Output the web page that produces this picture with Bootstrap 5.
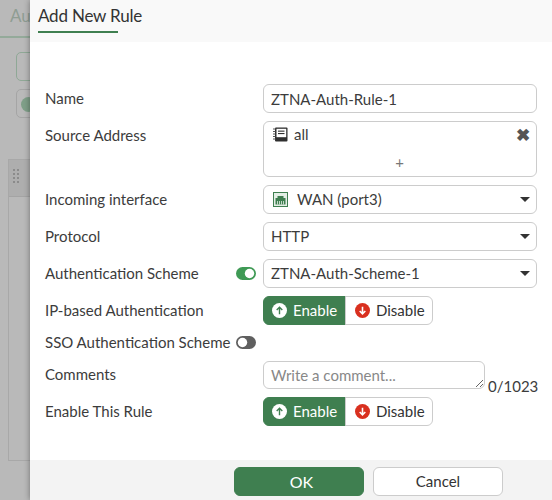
<!DOCTYPE html>
<html lang="en">
<head>
    <meta charset="UTF-8">
    <meta name="viewport" content="width=device-width, initial-scale=1.0">
    <title>Add New Rule</title>
    <link rel="stylesheet" href="https://cdn.jsdelivr.net/npm/bootstrap@5.3.0/dist/css/bootstrap.min.css">
    <style>
        html, body {
            height: 500px;
            overflow: hidden;
        }
        body {
            font-family: Lato, "Liberation Sans", sans-serif;
            font-size: 15px;
            color: #3c3c3c;
            background: #b9b9b9;
        }
        .back-pane {
            width: 30px;
            height: 500px;
            overflow: hidden;
            flex: none;
        }
        .back-title {
            height: 38px;
            padding: 3px 0 0 10px;
            font-size: 17px;
            white-space: nowrap;
            color: #8f9d93;
            border-bottom: 2px solid #94aa9a;
        }
        .back-btn {
            width: 40px;
            height: 29px;
            margin: 0 0 8px 16px;
            border: 1px solid #a5a5a5;
            border-radius: 5px;
        }
        .back-btn.first {
            margin-top: 14px;
            border-color: #8fa896;
        }
        .back-dot {
            width: 15px;
            height: 15px;
            margin: 7px 0 0 4px;
            border-radius: 50%;
            background: #7f9f88;
        }
        .back-table {
            width: 60px;
            height: 302px;
            margin: 41px 0 0 8px;
            border: 1px solid #a8a8a8;
        }
        .back-head {
            height: 37px;
            padding: 9px 0 0 4px;
            background: #aeaeae;
            border-bottom: 1px solid #a4a4a4;
        }
        .grip {
            display: block;
        }
        .rule-modal {
            flex: 1;
            height: 500px;
            background: #fff;
            box-shadow: 0 0 6px rgba(0, 0, 0, 0.4);
        }
        .rule-head {
            height: 42px;
            padding: 3px 0 0 8px;
            background: #f9f9f9;
        }
        .rule-tab {
            width: 80px;
            height: 30px;
            font-size: 17px;
            line-height: 25px;
            white-space: nowrap;
            color: #333;
            letter-spacing: -0.2px;
            border-bottom: 2px solid #3f7f50;
        }
        .rule-body {
            height: 418px;
            padding: 42px 15px 0;
        }
        .rule-row {
            margin-bottom: 8px;
        }
        .rule-label {
            width: 218px;
            flex: none;
            padding-right: 7px;
            line-height: 29px;
            white-space: nowrap;
        }
        .rule-label.tight {
            line-height: 27px;
        }
        .rule-label.snug {
            line-height: 28px;
        }
        .sso-row {
            margin-bottom: 10px;
        }
        .sso-row .rule-label {
            height: 18px;
            line-height: 18px;
        }
        .rule-field {
            width: 274px;
            height: 29px;
            padding: 0 7px;
            font-size: 15px;
            line-height: 27px;
            color: #3c3c3c;
            border: 1px solid #ccc;
            border-radius: 6px;
            box-shadow: none;
        }
        .addr-field {
            height: 56px;
            padding: 0 6px 0 9px;
        }
        .addr-item {
            height: 25px;
        }
        .addr-icon {
            margin-right: 6px;
        }
        .addr-plus {
            margin-top: 5px;
            padding-right: 4px;
            line-height: 20px;
            color: #777;
        }
        .addr-x {
            font-size: 17px;
            font-weight: 700;
            color: #555;
            line-height: 1;
        }
        .wan-icon {
            margin: 0 9px 0 2px;
        }
        .caret-down {
            width: 0;
            height: 0;
            margin-right: -1px;
            border-left: 5px solid transparent;
            border-right: 5px solid transparent;
            border-top: 5px solid #333;
        }
        .rule-row .form-check-input {
            width: 20px;
            height: 13px;
            margin: 0;
            border: 0;
            float: none;
            background-color: #5f5f5f;
            background-image: url("data:image/svg+xml,%3csvg xmlns='http://www.w3.org/2000/svg' viewBox='-4 -4 8 8'%3e%3ccircle r='2.9' fill='%23fff'/%3e%3c/svg%3e");
        }
        .rule-row .form-check-input:checked {
            background-color: #3f9a55;
        }
        .rule-switch {
            padding: 0;
            margin: 0;
            min-height: 0;
            display: flex;
        }
        .pick-group .btn {
            height: 29px;
            padding: 0 6px 0 9px;
            font-size: 15px;
            line-height: 27px;
            display: flex;
            align-items: center;
            gap: 6px;
            border: 1px solid #ccc;
            border-radius: 6px;
            color: #333;
            background: #fff;
        }
        .pick-group .btn.is-on {
            width: 83px;
            padding-left: 8px;
            color: #fff;
            background: #3f7f50;
            border-color: #3f7f50;
        }
        .pick-group .btn.is-off {
            width: 88px;
        }
        textarea.comment-box {
            width: 222px;
            height: 28px;
            min-height: 28px;
            padding: 0 7px;
            font-size: 15px;
            line-height: 26px;
            border: 1px solid #ccc;
            border-radius: 6px;
        }
        .comment-box::placeholder {
            color: #888;
        }
        .comment-count {
            margin: 0 0 -5px 3px;
            line-height: 1;
        }
        .comment-wrap {
            height: 28px;
        }
        .rule-foot {
            height: 40px;
            padding-top: 7px;
            background: #f3f3f3;
            padding-left: 204px;
        }
        .foot-btn {
            width: 130px;
            height: 29px;
            padding: 0;
            font-size: 15px;
            line-height: 27px;
            border-radius: 6px;
        }
        .foot-ok {
            padding-left: 5px;
            font-size: 16px;
            color: #fff;
            background: #3f7f50;
            border: 1px solid #3f7f50;
        }
        .foot-cancel {
            color: #333;
            background: #fff;
            border: 1px solid #ccc;
        }
        .foot-gap {
            gap: 9px;
        }
    </style>
</head>
<body>

    <div class="d-flex">
        <div class="back-pane">
            <div class="back-title">Au</div>
            <div class="back-btn first"></div>
            <div class="back-btn"><div class="back-dot"></div></div>
            <div class="back-table">
                <div class="back-head">
                    <svg class="grip" width="7" height="16" viewBox="0 0 7 16" fill="#8b8b8b">
                        <rect x="0" y="0" width="2" height="2"/><rect x="4" y="0" width="2" height="2"/>
                        <rect x="0" y="4" width="2" height="2"/><rect x="4" y="4" width="2" height="2"/>
                        <rect x="0" y="8" width="2" height="2"/><rect x="4" y="8" width="2" height="2"/>
                        <rect x="0" y="12" width="2" height="2"/><rect x="4" y="12" width="2" height="2"/>
                    </svg>
                </div>
            </div>
        </div>

        <div class="rule-modal">
            <div class="rule-head">
                <div class="rule-tab">Add New Rule</div>
            </div>

            <div class="rule-body">
                <div class="d-flex rule-row">
                    <div class="rule-label">Name</div>
                    <input class="form-control rule-field" type="text" value="ZTNA-Auth-Rule-1">
                </div>

                <div class="d-flex rule-row">
                    <div class="rule-label">Source Address</div>
                    <div class="rule-field addr-field">
                        <div class="d-flex align-items-center addr-item">
                            <svg width="15" height="15" viewBox="0 0 15 15" class="addr-icon">
                                <rect x="2" y="0.5" width="12.5" height="14" rx="1" fill="#2f2f2f"/>
                                <rect x="3.5" y="1.8" width="9.7" height="8.4" fill="#fff"/>
                                <rect x="5" y="3.6" width="6.5" height="1.1" fill="#2f2f2f"/>
                                <rect x="5" y="6" width="6.5" height="1.1" fill="#2f2f2f"/>
                                <path d="M0 2h2.5M0 4.5h2.5M0 7h2.5M0 9.5h2.5M0 12h2.5" stroke="#555" stroke-width="1"/>
                            </svg>
                            <span>all</span>
                            <span class="addr-x ms-auto">&#10006;</span>
                        </div>
                        <div class="text-center addr-plus">+</div>
                    </div>
                </div>

                <div class="d-flex rule-row">
                    <div class="rule-label">Incoming interface</div>
                    <div class="rule-field d-flex align-items-center">
                        <svg width="15" height="15" viewBox="0 0 15 15" class="wan-icon">
                            <rect x="0.5" y="0.5" width="14" height="14" fill="#e4efe6" stroke="#3f7f50"/>
                            <path d="M2.5 12.5V6h2V4h6v2h2v6.5z" fill="#3f7f50"/>
                            <path d="M4.5 9v3.5M6.5 9v3.5M8.5 9v3.5M10.5 9v3.5" stroke="#e4efe6" stroke-width="0.8"/>
                        </svg>
                        <span>WAN (port3)</span>
                        <span class="caret-down ms-auto"></span>
                    </div>
                </div>

                <div class="d-flex rule-row">
                    <div class="rule-label">Protocol</div>
                    <div class="rule-field d-flex align-items-center">
                        <span>HTTP</span>
                        <span class="caret-down ms-auto"></span>
                    </div>
                </div>

                <div class="d-flex rule-row">
                    <div class="rule-label d-flex align-items-center justify-content-between">
                        <span>Authentication Scheme</span>
                        <div class="form-check form-switch rule-switch">
                            <input class="form-check-input" type="checkbox" checked>
                        </div>
                    </div>
                    <div class="rule-field d-flex align-items-center">
                        <span>ZTNA-Auth-Scheme-1</span>
                        <span class="caret-down ms-auto"></span>
                    </div>
                </div>

                <div class="d-flex rule-row">
                    <div class="rule-label">IP-based Authentication</div>
                    <div class="btn-group pick-group">
                        <button type="button" class="btn is-on">
                            <svg width="15" height="15" viewBox="0 0 16 16"><circle cx="8" cy="8" r="8" fill="#fff"/><path d="M8 12V5M5 7.5L8 4.5l3 3" fill="none" stroke="#3f7f50" stroke-width="1.5"/></svg>
                            Enable
                        </button>
                        <button type="button" class="btn is-off">
                            <svg width="15" height="15" viewBox="0 0 16 16"><circle cx="8" cy="8" r="8" fill="#d9301f"/><path d="M8 4v7M5 8.5l3 3 3-3" fill="none" stroke="#fff" stroke-width="1.7"/></svg>
                            Disable
                        </button>
                    </div>
                </div>

                <div class="d-flex rule-row sso-row">
                    <div class="rule-label d-flex align-items-center justify-content-between">
                        <span>SSO Authentication Scheme</span>
                        <div class="form-check form-switch rule-switch">
                            <input class="form-check-input" type="checkbox">
                        </div>
                    </div>
                </div>

                <div class="d-flex rule-row">
                    <div class="rule-label tight">Comments</div>
                    <div class="d-flex align-items-end comment-wrap">
                        <textarea class="form-control comment-box" placeholder="Write a comment..."></textarea>
                        <span class="comment-count">0/1023</span>
                    </div>
                </div>

                <div class="d-flex rule-row">
                    <div class="rule-label snug">Enable This Rule</div>
                    <div class="btn-group pick-group">
                        <button type="button" class="btn is-on">
                            <svg width="15" height="15" viewBox="0 0 16 16"><circle cx="8" cy="8" r="8" fill="#fff"/><path d="M8 12V5M5 7.5L8 4.5l3 3" fill="none" stroke="#3f7f50" stroke-width="1.5"/></svg>
                            Enable
                        </button>
                        <button type="button" class="btn is-off">
                            <svg width="15" height="15" viewBox="0 0 16 16"><circle cx="8" cy="8" r="8" fill="#d9301f"/><path d="M8 4v7M5 8.5l3 3 3-3" fill="none" stroke="#fff" stroke-width="1.7"/></svg>
                            Disable
                        </button>
                    </div>
                </div>
            </div>

            <div class="rule-foot d-flex foot-gap">
                <button type="button" class="btn foot-btn foot-ok">OK</button>
                <button type="button" class="btn foot-btn foot-cancel">Cancel</button>
            </div>
        </div>
    </div>

    <script src="https://cdn.jsdelivr.net/npm/bootstrap@5.3.0/dist/js/bootstrap.bundle.min.js"></script>
</body>
</html>
